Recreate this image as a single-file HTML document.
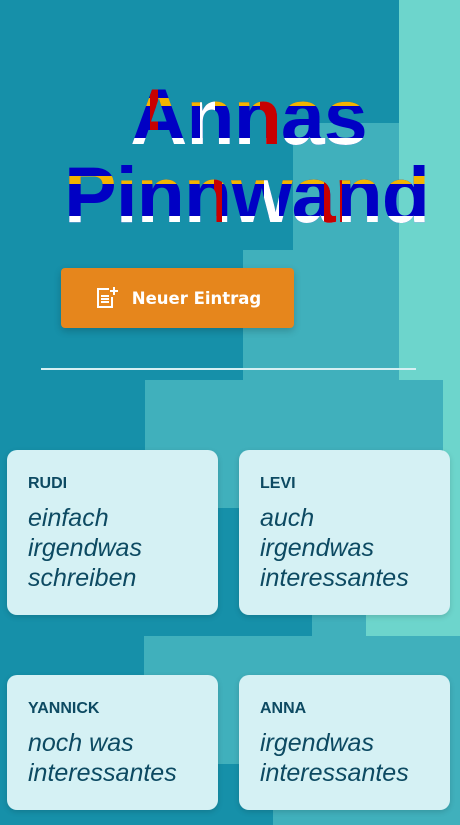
<!DOCTYPE html>
<html><head><meta charset="utf-8"><style>
*{margin:0;padding:0;box-sizing:border-box}
body{width:460px;height:825px;overflow:hidden;background:#1690a9;position:relative;font-family:"Liberation Sans",sans-serif}
.r{position:absolute}
.m{background:#40b0bc}.l{background:#6dd5cc}
h1{position:absolute;left:0;width:100%;font-size:79px;font-weight:bold;line-height:78px;letter-spacing:-1px;
background:
linear-gradient(90deg,transparent 0 150px,#c80000 150px 158px,transparent 158px 200px,#fff 200px 215px,transparent 215px 260px,#c80000 260px 278px,transparent 278px),
linear-gradient(180deg,transparent 0 20px,#f5b400 20px 28px,transparent 28px 60px,#fff 60px 70px,transparent 70px 100px,#fff 100px 130px,transparent 130px),
#0000c4;
-webkit-background-clip:text;background-clip:text;color:transparent}
.btn{position:absolute;left:61px;top:268px;width:233px;height:60px;background:#e6861c;border-radius:4px;box-shadow:0 3px 8px rgba(0,0,0,.2);color:#fff;font-family:"DejaVu Sans",sans-serif;font-weight:bold;font-size:16.5px;display:flex;align-items:center;justify-content:center;gap:12px}
.hr{position:absolute;left:41px;top:368px;width:375px;height:2px;background:#d5f0f3}
.c{position:absolute;width:211px;background:#d5f1f4;border-radius:10px;box-shadow:0 2px 6px rgba(0,0,0,.15);padding:25px 21px;color:#0d4a62}
.c b{display:block;font-size:16px;margin-bottom:10px}
.c i{display:block;font-size:25px;line-height:30px}
</style></head><body>
<div class="r l" style="left:399px;top:0;width:61px;height:380px"></div>
<div class="r m" style="left:293px;top:123px;width:106px;height:130px"></div>
<div class="r m" style="left:243px;top:250px;width:156px;height:130px"></div>
<div class="r m" style="left:145px;top:380px;width:298px;height:128px"></div>
<div class="r l" style="left:443px;top:380px;width:17px;height:256px"></div>
<div class="r m" style="left:312px;top:508px;width:131px;height:128px"></div>
<div class="r l" style="left:366px;top:575px;width:94px;height:61px"></div>
<div class="r m" style="left:144px;top:636px;width:316px;height:128px"></div>
<div class="r m" style="left:273px;top:764px;width:187px;height:61px"></div>
<h1 style="top:78px;text-align:center;padding-left:37px">Annas</h1>
<h1 style="top:156px;left:64px;width:auto">Pinnwand</h1>
<div class="btn"><svg width="26" height="26" viewBox="0 0 26 26" fill="none" stroke="#fff" stroke-width="2"><path d="M15 4H4v18h14V12"/><path d="M7 11h8M7 14h8M7 17h8"/><path d="M20 2v8M16 6h8"/></svg>Neuer Eintrag</div>
<div class="hr"></div>
<div class="c" style="left:7px;top:450px;height:165px"><b>RUDI</b><i>einfach<br>irgendwas<br>schreiben</i></div>
<div class="c" style="left:239px;top:450px;height:165px"><b>LEVI</b><i>auch<br>irgendwas<br>interessantes</i></div>
<div class="c" style="left:7px;top:675px;height:135px"><b>YANNICK</b><i>noch was<br>interessantes</i></div>
<div class="c" style="left:239px;top:675px;height:135px"><b>ANNA</b><i>irgendwas<br>interessantes</i></div>
</body></html>
